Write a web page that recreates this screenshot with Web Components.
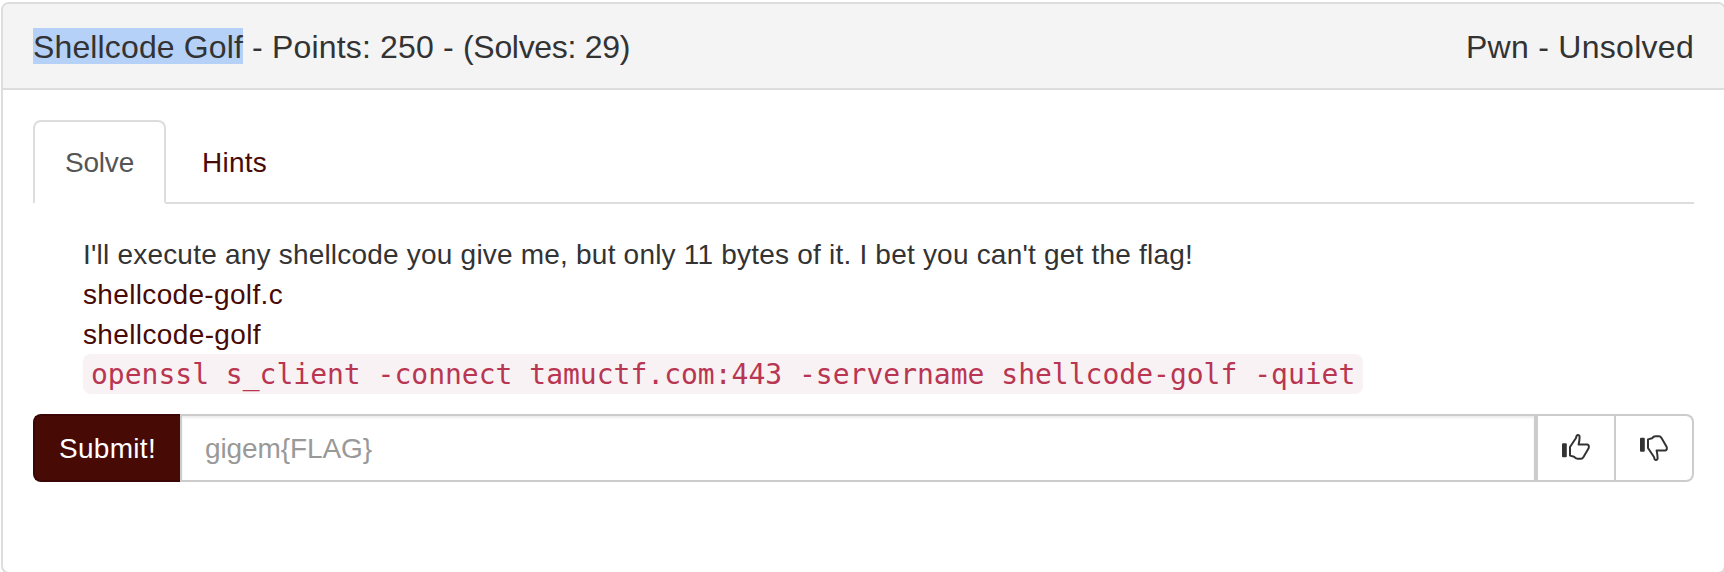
<!DOCTYPE html>
<html lang="en"><head><meta charset="utf-8"><title>Shellcode Golf</title>
<style>
html,body{margin:0;height:100%;overflow:hidden;background:#fff}
body{font:28px/42px "Liberation Sans",Arial,sans-serif;color:#333}
</style></head><body>
<challenge-panel>
  <panel-heading slot="heading"><mark-text slot="title" w="210">Shellcode Golf</mark-text><fit-text slot="title" w="220"> - Points: 250 - </fit-text><fit-text slot="title" w="167">(Solves: 29)</fit-text><fit-text slot="status" w="228">Pwn - Unsolved</fit-text></panel-heading>
  <tab-bar><tab-item active><fit-text w="69">Solve</fit-text></tab-item><tab-item><fit-text w="65">Hints</fit-text></tab-item></tab-bar>
  <challenge-text></challenge-text>
  <flag-form></flag-form>
</challenge-panel>
<script>
function define(name, html, setup) {
  const t = document.createElement('template');
  t.innerHTML = html;
  customElements.define(name, class extends HTMLElement {
    constructor() { super(); this.attachShadow({mode: 'open'}).append(t.content.cloneNode(true)); }
    connectedCallback() { if (setup) setup(this); }
  });
}
// Sets letter spacing so that the line has the width given in its "w" attribute.
function fit(el) {
  const w = +el.getAttribute('w');
  if (!w) return;
  el.style.letterSpacing = ((w - el.getBoundingClientRect().width) / el.textContent.length) + 'px';
}
define('panel-heading', `<style>:host{display:flex;justify-content:space-between;height:86px;box-sizing:border-box;padding:24px 30px 0;background:#f4f4f4;border-bottom:2px solid #ddd;border-radius:6px 6px 0 0;font-size:32px;line-height:38px}
div{display:flex}</style><div><slot name="title"></slot></div><div><slot name="status"></slot></div>`);
define('challenge-panel', `<style>:host{display:block;box-sizing:border-box;width:1725px;height:572px;margin:2px 0 0 1px;border:2px solid #ddd;border-radius:8px}
main{padding:30px}</style><slot name="heading"></slot><main><slot></slot></main>`);
define('tab-bar', `<style>:host{display:flex;gap:4px;height:84px;box-sizing:border-box;border-bottom:2px solid #ddd}</style><slot></slot>`);
define('tab-item', `<style>:host{display:block;box-sizing:border-box;height:84px;padding:20px 30px 18px;border:2px solid transparent;border-radius:8px 8px 0 0;color:#480a05}
:host([active]){background:#fff;border-color:#ddd;border-bottom-color:#fff;color:#555}</style><slot></slot>`);
define('challenge-text', `<style>:host{display:block;padding:30px 50px 20px}
div{height:40px}.link{color:#480a05}
code{display:block;width:max-content;height:40px;box-sizing:border-box;padding:0 8px;border-radius:8px;background:#f8f2f4;color:#b93653;font:28px/42px "DejaVu Sans Mono",monospace}</style>
<div><fit-text w="1110">I'll execute any shellcode you give me, but only 11 bytes of it. I bet you can't get the flag!</fit-text></div>
<div class="link"><fit-text w="200">shellcode-golf.c</fit-text></div>
<div class="link"><fit-text w="178">shellcode-golf</fit-text></div>
<code>openssl s_client -connect tamuctf.com:443 -servername shellcode-golf -quiet</code>`);
define('thumb-icon', `<style>:host{display:block;width:28px;height:28px}:host([down]) svg{transform:translateY(1px) scaleY(-1)}svg{display:block}</style>
<svg width="28" height="28" viewBox="0 0 28 28" fill="none" stroke="#333" stroke-width="2" stroke-linejoin="round"><rect x="0" y="10.200" width="4.800" height="14" rx="1" fill="#333" stroke="none"/><path d="M8 22.600V14L14 5L14.600 2.800Q16 1 17.400 2.800Q18 5 16.600 11.600H25.200Q27.500 12 26.600 15.300L21.500 24Q20.500 25.700 19 25.700H15.500Q13.500 25.700 12 23.700Z"/></svg>`);
define('flag-form', `<style>:host{display:flex;height:68px}
.submit{width:147px;box-sizing:border-box;padding:12px 24px 10px;border:2px solid #3a0502;border-right:0;border-radius:8px 0 0 8px;background:#480a05;color:#fff}
.input{flex:1;box-sizing:border-box;border:2px solid #ccc;padding:12px 23px 10px;color:#999;box-shadow:inset 0 2px 2px rgba(0,0,0,.075)}
.vote{box-sizing:border-box;width:80px;border:2px solid #ccc;display:grid;place-items:center;padding-bottom:2px}
.vote+.vote{border-left:0;border-radius:0 8px 8px 0;width:78px}</style>
<div class="submit"><fit-text w="97">Submit!</fit-text></div><div class="input"><fit-text w="167">gigem{FLAG}</fit-text></div>
<div class="vote"><thumb-icon></thumb-icon></div><div class="vote"><thumb-icon down></thumb-icon></div>`);
define('mark-text', `<style>:host{display:block;height:36px;background:#b5d1f7;white-space:pre}</style><slot></slot>`, fit);
define('fit-text', `<style>:host{display:inline-block;white-space:pre}</style><slot></slot>`, fit);
</script></body></html>
